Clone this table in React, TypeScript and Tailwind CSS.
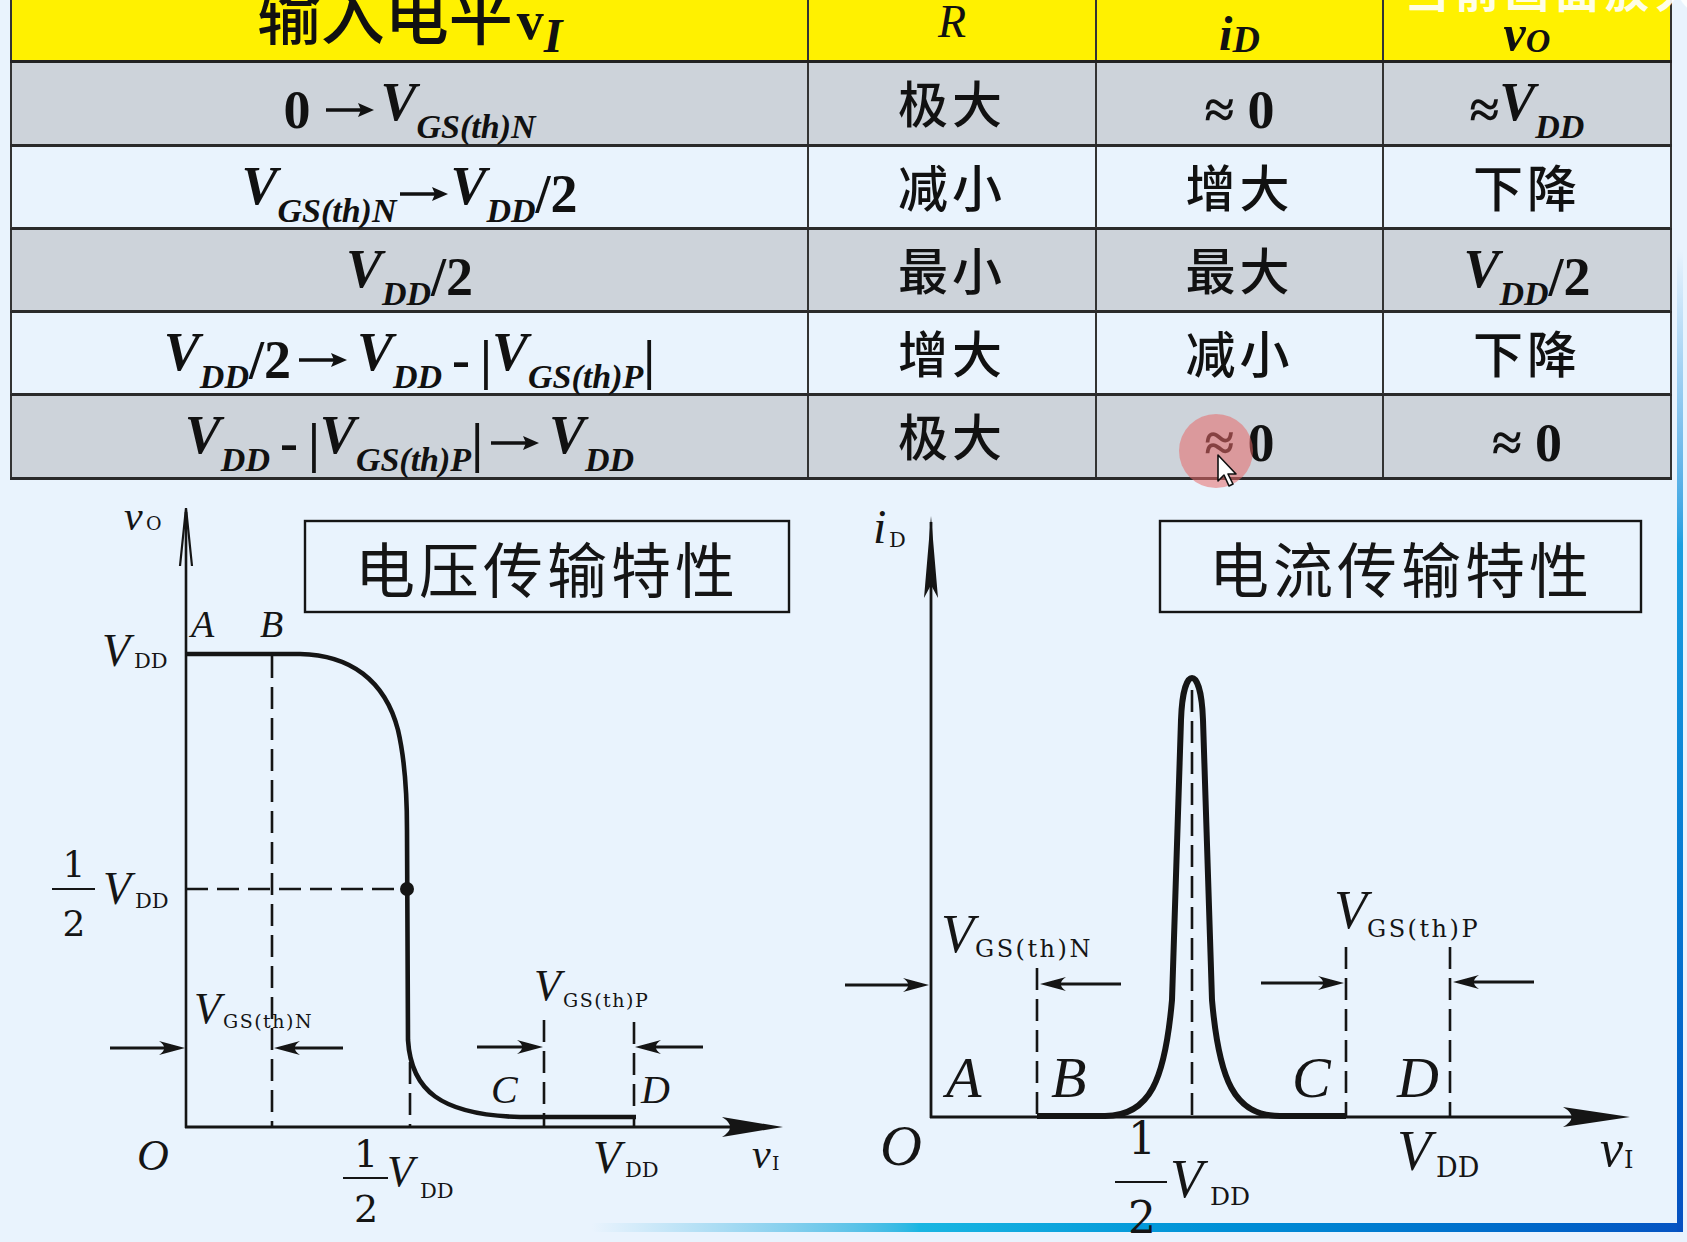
import React from 'react';

const INK = '#151515';
const ITAL = "'Liberation Serif', 'DejaVu Serif', serif";
const UP = "'DejaVu Serif', 'Liberation Serif', serif";
const CJK = "'Noto Sans CJK SC', sans-serif";

function V({ sub, big = 'V' }: { sub?: string; big?: string }) {
  return (
    <span className="italic">
      {big}
      {sub && <span className="text-[34px] align-[-18px]">{sub}</span>}
    </span>
  );
}

// long bold arrow used in the table formulas
function Arr({ className = 'mx-[10px]' }: { className?: string }) {
  return (
    <svg className={`inline-block align-middle ${className}`} width={48} height={18} viewBox="0 0 48 18">
      <line x1={0} y1={9} x2={38} y2={9} stroke="#111" strokeWidth={3.6} />
      <path d="M48,9 L32,2 L35,9 L32,16 Z" fill="#111" />
    </svg>
  );
}

type Row = { shade: boolean; input: React.ReactNode; r: string; id: React.ReactNode; vo: React.ReactNode; h: string };

const rows: Row[] = [
  {
    shade: true,
    h: 'h-[84px]',
    input: (
      <>
        0<Arr className="ml-[16px] mr-[6px]" />
        <V sub="GS(th)N" />
      </>
    ),
    r: '极大',
    id: <>≈ 0</>,
    vo: (
      <>
        ≈ <V sub="DD" />
      </>
    ),
  },
  {
    shade: false,
    h: 'h-[83px]',
    input: (
      <>
        <V sub="GS(th)N" />
        <Arr className="ml-[4px] mr-[2px]" />
        <V sub="DD" />
        /2
      </>
    ),
    r: '减小',
    id: '增大',
    vo: '下降',
  },
  {
    shade: true,
    h: 'h-[83px]',
    input: (
      <>
        <V sub="DD" />
        /2
      </>
    ),
    r: '最小',
    id: '最大',
    vo: (
      <>
        <V sub="DD" />
        /2
      </>
    ),
  },
  {
    shade: false,
    h: 'h-[83px]',
    input: (
      <>
        <V sub="DD" />
        /2
        <Arr className="ml-[8px] mr-[10px]" />
        <V sub="DD" />
        <span className="mx-[10px]">-</span>|<V sub="GS(th)P" />|
      </>
    ),
    r: '增大',
    id: '减小',
    vo: '下降',
  },
  {
    shade: true,
    h: 'h-[84px]',
    input: (
      <>
        <V sub="DD" />
        <span className="mx-[10px]">-</span>|<V sub="GS(th)P" />|
        <Arr className="ml-[8px] mr-[10px]" />
        <V sub="DD" />
      </>
    ),
    r: '极大',
    id: <>≈ 0</>,
    vo: <>≈ 0</>,
  },
];

const cols = 'grid-cols-[797px_288px_287px_290px]';
const cellBase = 'flex items-center justify-center border-l-2 border-[#333]';
const headBase = 'flex h-[60px] items-end justify-center overflow-hidden border-l-2 border-[#333] text-[#111]';
const mathCell = "font-['Liberation_Serif','Noto_Sans_CJK_SC',serif] font-bold text-[54px] leading-none text-[#111] whitespace-nowrap pt-[12px]";
const cjkCell = "font-['Noto_Sans_CJK_SC',sans-serif] font-medium text-[50px] tracking-[4px] leading-none text-[#111] pb-[6px]";

function Cell({ children, last }: { children: React.ReactNode; last?: boolean }) {
  const isText = typeof children === 'string' && /[\u4e00-\u9fff]/.test(children);
  return <div className={`${cellBase} ${last ? 'border-r-2' : ''} ${isText ? cjkCell : mathCell}`}>{children}</div>;
}

function Table() {
  return (
    <div className="ml-[10px] w-[1662px]">
      <div className={`grid h-[63px] grid-rows-[60px] ${cols} overflow-hidden border-b-[3px] border-[#222] bg-[#fff100]`}>
        <div className={`${headBase} pb-[17px]`}>
          <span className="font-['Noto_Sans_CJK_SC',sans-serif] text-[64px] font-medium leading-none">输入电平</span>
          <span className="relative top-[17px] ml-[4px] font-['Liberation_Serif',serif] text-[54px] font-bold leading-none">
            v<span className="align-[-13px] text-[48px] italic">I</span>
          </span>
        </div>
        <div className={`${headBase} pb-[15px] font-['Liberation_Serif',serif] text-[46px] italic leading-none`}>R</div>
        <div className={`${headBase} pb-[2px] font-['Liberation_Serif',serif] text-[48px] font-bold italic leading-none`}>
          i<span className="align-[-14px] text-[38px]">D</span>
        </div>
        <div className={`${headBase} border-r-2 pb-[2px] font-['Liberation_Serif',serif] text-[50px] font-bold italic leading-none`}>
          v<span className="align-[-19px] text-[34px]">O</span>
        </div>
      </div>
      {rows.map((row, i) => (
        <div
          key={i}
          className={`grid ${row.h} ${cols} border-b-[3px] border-[#2a2a2a] ${row.shade ? 'bg-[#cdd3da]' : 'bg-[#e9f3fd]'}`}
        >
          <Cell>{row.input}</Cell>
          <Cell>{row.r}</Cell>
          <Cell>{row.id}</Cell>
          <Cell last>{row.vo}</Cell>
        </div>
      ))}
    </div>
  );
}

type TProps = { x: number; y: number; size: number; children: React.ReactNode; italic?: boolean; anchor?: 'start' | 'middle' | 'end'; spacing?: number; family?: string };

function T({ x, y, size, children, italic, anchor = 'start', spacing = 0, family }: TProps) {
  return (
    <text
      x={x}
      y={y}
      fontSize={size}
      fontFamily={family ?? (italic ? ITAL : UP)}
      fontStyle={italic ? 'italic' : 'normal'}
      textAnchor={anchor}
      letterSpacing={spacing}
      fill={INK}
    >
      {children}
    </text>
  );
}

function HArrow({ from, to, y }: { from: number; to: number; y: number }) {
  const d = Math.sign(to - from);
  const hl = 26;
  return (
    <g>
      <line x1={from} y1={y} x2={to - d * 10} y2={y} stroke={INK} strokeWidth={3.2} />
      <path d={`M${to},${y} L${to - d * hl},${y - 7} Q${to - d * hl * 0.6},${y} ${to - d * hl},${y + 7} Z`} fill={INK} />
    </g>
  );
}

function Dash({ x1, y1, x2, y2 }: { x1: number; y1: number; x2: number; y2: number }) {
  return <line x1={x1} y1={y1} x2={x2} y2={y2} stroke={INK} strokeWidth={2.6} strokeDasharray="22 9" />;
}

function Half({ cx, y1, y2, lineY, x1, x2, size }: { cx: number; y1: number; y2: number; lineY: number; x1: number; x2: number; size: number }) {
  return (
    <g>
      <T x={cx} y={y1} size={size} anchor="middle">
        1
      </T>
      <line x1={x1} y1={lineY} x2={x2} y2={lineY} stroke={INK} strokeWidth={2.2} />
      <T x={cx} y={y2} size={size} anchor="middle">
        2
      </T>
    </g>
  );
}

function VoltageChart() {
  return (
    <svg width={840} height={762} viewBox="0 480 840 762" className="shrink-0">
      <rect x={305} y={521} width={484} height={91} fill="none" stroke={INK} strokeWidth={2.4} />
      <text x={547} y={593} fontSize={60} fontFamily={CJK} textAnchor="middle" letterSpacing={4} fill={INK}>
        电压传输特性
      </text>

      {/* axes */}
      <line x1={186} y1={512} x2={186} y2={1128} stroke={INK} strokeWidth={2.6} />
      <path d="M180,566 L186,508 L192,566" fill="none" stroke={INK} strokeWidth={2.2} />
      <line x1={185} y1={1127} x2={770} y2={1127} stroke={INK} strokeWidth={3} />
      <path d="M783,1127 L722,1117 Q738,1127 722,1137 Z" fill={INK} />

      <T x={124} y={530} size={42} italic>
        v
      </T>
      <T x={146} y={530} size={19}>
        O
      </T>

      {/* guides */}
      <Dash x1={272} y1={656} x2={272} y2={1127} />
      <Dash x1={186} y1={889} x2={405} y2={889} />
      <Dash x1={410} y1={1062} x2={410} y2={1127} />
      <Dash x1={544} y1={1020} x2={544} y2={1127} />
      <Dash x1={634} y1={1022} x2={634} y2={1127} />

      {/* curve */}
      <path
        d="M186,654 L300,654 C350,655 385,680 398,730 C405,760 407,790 407,830 L408,1040 C411,1090 440,1115 520,1117 L636,1117"
        fill="none"
        stroke={INK}
        strokeWidth={4.6}
      />
      <circle cx={407} cy={889} r={7} fill={INK} />

      <T x={191} y={637} size={38} italic>
        A
      </T>
      <T x={260} y={637} size={38} italic>
        B
      </T>
      <T x={102} y={666} size={46} italic>
        V
      </T>
      <T x={134} y={668} size={21}>
        DD
      </T>

      <Half cx={74} y1={877} y2={936} lineY={889} x1={52} x2={95} size={36} />
      <T x={103} y={904} size={46} italic>
        V
      </T>
      <T x={135} y={908} size={21}>
        DD
      </T>

      <HArrow from={110} to={185} y={1048} />
      <HArrow from={343} to={274} y={1048} />
      <T x={194} y={1023} size={44} italic>
        V
      </T>
      <T x={223} y={1028} size={19} spacing={1.5}>
        GS(th)N
      </T>

      <HArrow from={477} to={543} y={1047} />
      <HArrow from={703} to={635} y={1047} />
      <T x={534} y={1000} size={44} italic>
        V
      </T>
      <T x={563} y={1007} size={19} spacing={1.5}>
        GS(th)P
      </T>

      <T x={491} y={1103} size={40} italic>
        C
      </T>
      <T x={641} y={1103} size={40} italic>
        D
      </T>

      <T x={137} y={1170} size={44} italic>
        O
      </T>
      <Half cx={366} y1={1167} y2={1222} lineY={1178} x1={343} x2={388} size={38} />
      <T x={387} y={1186} size={44} italic>
        V
      </T>
      <T x={420} y={1198} size={21}>
        DD
      </T>
      <T x={593} y={1173} size={46} italic>
        V
      </T>
      <T x={625} y={1177} size={21}>
        DD
      </T>
      <T x={752} y={1168} size={42} italic>
        v
      </T>
      <T x={772} y={1170} size={19}>
        I
      </T>
    </svg>
  );
}

function CurrentChart() {
  return (
    <svg width={847} height={762} viewBox="840 480 847 762" className="shrink-0">
      <rect x={1160} y={521} width={481} height={91} fill="none" stroke={INK} strokeWidth={2.4} />
      <text x={1401} y={593} fontSize={60} fontFamily={CJK} textAnchor="middle" letterSpacing={4} fill={INK}>
        电流传输特性
      </text>

      <line x1={931} y1={522} x2={931} y2={1118} stroke={INK} strokeWidth={2.8} />
      <path d="M931,516 L938,598 L931,585 L924,598 Z" fill={INK} />
      <line x1={930} y1={1117} x2={1615} y2={1117} stroke={INK} strokeWidth={3} />
      <path d="M1630,1117 L1563,1107 Q1580,1117 1563,1127 Z" fill={INK} />

      <T x={873} y={543} size={48} italic>
        i
      </T>
      <T x={889} y={547} size={21}>
        D
      </T>

      <Dash x1={1037} y1={968} x2={1037} y2={1117} />
      <Dash x1={1346} y1={947} x2={1346} y2={1117} />
      <Dash x1={1450} y1={947} x2={1450} y2={1117} />
      <Dash x1={1192} y1={690} x2={1192} y2={1117} />

      <path
        d="M1037,1116 L1105,1116 C1150,1116 1165,1080 1172,1000 L1181,720 C1183,664 1201,664 1203,720 L1212,1000 C1219,1080 1234,1116 1280,1116 L1346,1116"
        fill="none"
        stroke={INK}
        strokeWidth={6}
      />

      <HArrow from={845} to={929} y={985} />
      <HArrow from={1121} to={1040} y={984} />
      <HArrow from={1261} to={1344} y={983} />
      <HArrow from={1534} to={1453} y={982} />

      <T x={941} y={952} size={54} italic>
        V
      </T>
      <T x={975} y={957} size={24} spacing={2.5}>
        GS(th)N
      </T>
      <T x={1334} y={928} size={54} italic>
        V
      </T>
      <T x={1367} y={937} size={24} spacing={2.5}>
        GS(th)P
      </T>

      <T x={946} y={1097} size={58} italic>
        A
      </T>
      <T x={1051} y={1097} size={58} italic>
        B
      </T>
      <T x={1292} y={1097} size={58} italic>
        C
      </T>
      <T x={1397} y={1097} size={58} italic>
        D
      </T>

      <T x={880} y={1165} size={58} italic>
        O
      </T>
      <Half cx={1142} y1={1154} y2={1233} lineY={1182} x1={1115} x2={1167} size={44} />
      <T x={1170} y={1197} size={54} italic>
        V
      </T>
      <T x={1210} y={1205} size={25}>
        DD
      </T>
      <T x={1397} y={1170} size={56} italic>
        V
      </T>
      <T x={1436} y={1177} size={27}>
        DD
      </T>
      <T x={1600} y={1166} size={52} italic>
        v
      </T>
      <T x={1624} y={1168} size={24}>
        I
      </T>
    </svg>
  );
}

export default function App() {
  return (
    <div className="relative h-[1242px] w-[1687px] overflow-hidden bg-[#e9f3fd]">
      {/* slide frame accents */}
      <div className="absolute left-[592px] top-[1223px] h-[9px] w-[1091px] bg-gradient-to-r from-[#e9f3fd] via-[#19b6e2] via-30% to-[#0653c2]" />
      <div className="absolute left-[1677px] top-[250px] h-[982px] w-[6px] bg-gradient-to-b from-[#e9f3fd] via-[#1b9fe0] via-30% to-[#0650c0]" />

      <div className="relative">
        <Table />
        <div className="flex">
          <VoltageChart />
          <CurrentChart />
        </div>
      </div>

      {/* screen-recorder overlays */}
      <div className="absolute -top-[33px] left-[1405px] whitespace-nowrap font-['Noto_Sans_CJK_SC',sans-serif] text-[44px] font-bold leading-none tracking-[6px] text-white/90">
        当前画面放大
      </div>
      <div className="absolute left-[1179px] top-[414px] h-[74px] w-[74px] rounded-full bg-[#e86a6a]/55" />
      <svg className="absolute left-[1216px] top-[453px]" width={30} height={40} viewBox="0 0 30 40">
        <path d="M2,2 L2,28 L8,22 L13,33 L17,31 L12,21 L20,21 Z" fill="#fff" stroke="#111" strokeWidth={1.6} strokeLinejoin="round" />
      </svg>
    </div>
  );
}
